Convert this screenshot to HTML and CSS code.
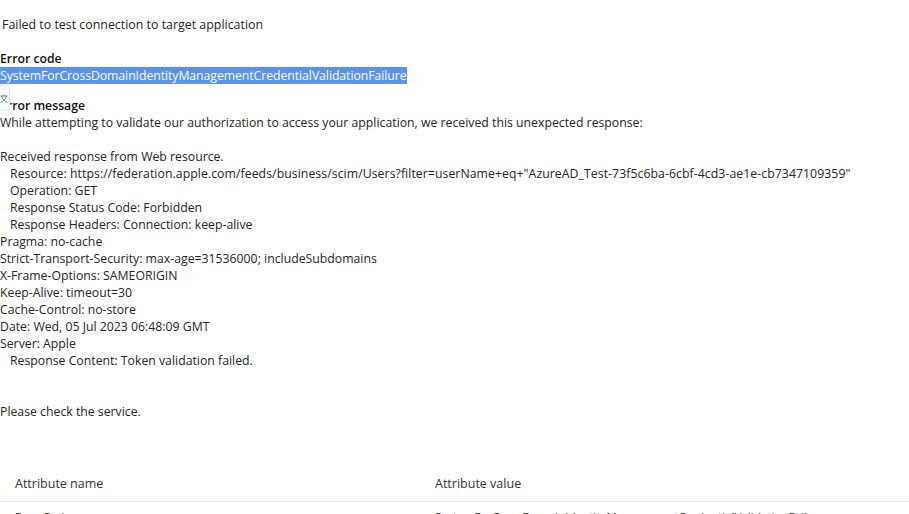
FILE: index.html
```html
<!DOCTYPE html>
<html lang="en">
<head>
<meta charset="utf-8">
<title>Failed to test connection</title>
<link rel="stylesheet" href="styles.css">
</head>
<body>
<main class="page">
  <p class="summary">Failed to test connection to target application</p>
  <section class="block code-block">
    <h2 class="label">Error code</h2>
    <div><span class="selected">SystemForCrossDomainIdentityManagementCredentialValidationFailure</span></div>
  </section>
  <section class="block message-block">
    <h2 class="label">Error message</h2>
    <button class="copy" type="button" aria-label="Translate">
      <svg width="8" height="9" viewBox="0 0 8 9"><path d="M0.5 2h7M4 0.5V2M1.5 2c.6 2.6 2.6 5 6 6.5M6.5 2c-.6 2.6-2.6 5-6 6.5" fill="none" stroke="#6f8296" stroke-width="1"/></svg>
    </button>
    <div class="message">While attempting to validate our authorization to access your application, we received this unexpected response:

Received response from Web resource.
<span class="indent resource">Resource: https://federation.apple.com/feeds/business/scim/Users?filter=userName+eq+"AzureAD_Test-73f5c6ba-6cbf-4cd3-ae1e-cb7347109359"</span>
<span class="indent">Operation: GET</span>
<span class="indent">Response Status Code: Forbidden</span>
<span class="indent">Response Headers: Connection: keep-alive</span>
Pragma: no-cache
Strict-Transport-Security: max-age=31536000; includeSubdomains
X-Frame-Options: SAMEORIGIN
Keep-Alive: timeout=30
Cache-Control: no-store
Date: Wed, 05 Jul 2023 06:48:09 GMT
Server: Apple
<span class="indent">Response Content: Token validation failed.</span>


Please check the service.</div>
  </section>
  <div class="table">
    <div class="row head">
      <div>Attribute name</div>
      <div>Attribute value</div>
    </div>
    <div class="row body-row">
      <div>ErrorCode</div>
      <div>SystemForCrossDomainIdentityManagementCredentialValidationFailure</div>
    </div>
  </div>
</main>
</body>
</html>
```
FILE: styles.css
```css
html, body {
  margin: 0;
  height: 514px;
  overflow: hidden;
  background: #fff;
}
.page {
  font-family: "Open Sans", "Noto Sans", sans-serif;
  font-size: 12.28px;
  line-height: 17px;
  color: #252423;
  display: flex;
  flex-direction: column;
}
.summary {
  margin: 16px 0 0 2px;
  font-size: 12.4px;
}
.block {
  position: relative;
}
.code-block {
  margin-top: 17px;
}
.message-block {
  margin-top: 13px;
}
.label {
  margin: 0;
  font: inherit;
  font-weight: 600;
  color: #111;
}
.selected {
  background: #5a93ea;
  color: #fff;
  letter-spacing: -0.066px;
}
.copy {
  position: absolute;
  left: -4px;
  top: -12px;
  width: 14px;
  height: 26px;
  padding: 0 0 0 3px;
  border: 1px solid #e6e6e6;
  border-radius: 2px;
  background: #f7f7f7;
  display: flex;
  align-items: center;
}
.message {
  white-space: pre-wrap;
}
.indent {
  margin-left: 10px;
}
.resource {
  letter-spacing: 0.06px;
}
.table {
  margin-top: 45px;
}
.row {
  display: grid;
  grid-template-columns: 420px 1fr;
  padding: 0 15px;
  align-items: center;
}
.head {
  height: 36px;
  font-size: 12.5px;
  font-weight: 500;
  color: #323130;
  border-bottom: 1px solid #e8e8e8;
}
.body-row {
  height: 28px;
  font-size: 11.67px;
}
```
